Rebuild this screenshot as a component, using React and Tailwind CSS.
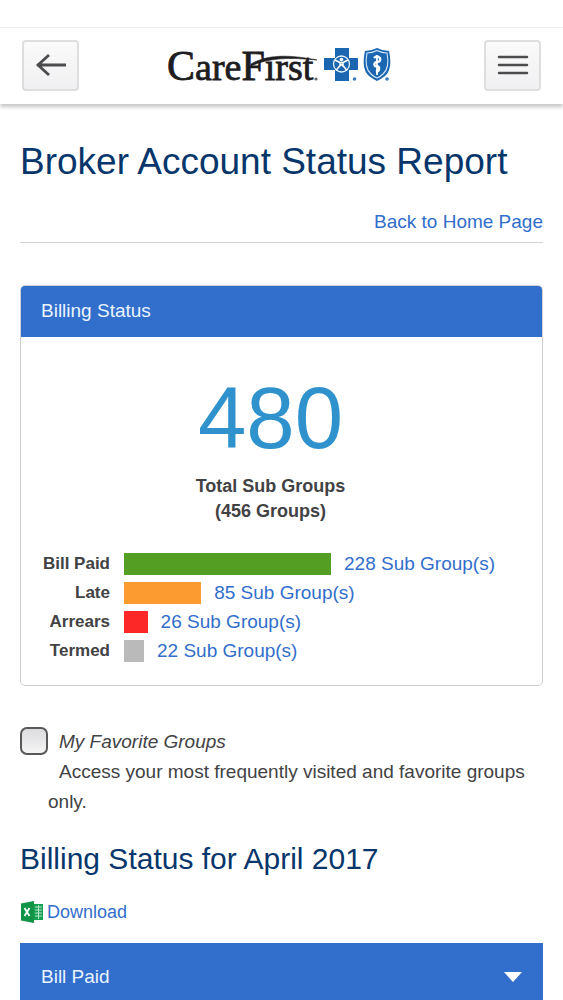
import React, { useState } from 'react';

const bars = [
  { label: 'Bill Paid', count: 228, color: 'bg-[#549e23]' },
  { label: 'Late', count: 85, color: 'bg-[#fb9b30]' },
  { label: 'Arrears', count: 26, color: 'bg-[#fc2828]' },
  { label: 'Termed', count: 22, color: 'bg-[#bababa]' },
];

const maxCount = Math.max(...bars.map((bar) => bar.count));

function Logo() {
  return (
    <svg viewBox="0 0 230 50" className="w-[230px] h-[50px] overflow-visible" role="img" aria-label="CareFirst">
      <text x="0" y="40" fontFamily="'Liberation Serif', serif" fontSize="38" fill="#1d1d1f" stroke="#1d1d1f" strokeWidth="0.8">
        <tspan fontSize="42">C</tspan>are<tspan fontSize="42">F</tspan>irst
      </text>
      {/* the swoosh takes the place of the dot on the i */}
      <circle cx="103" cy="16" r="3.500" fill="#fff" />
      <path d="M84 24C99 15 120 14 150 20C122 17 101 18 84 26z" fill="#1d1d1f" stroke="#1d1d1f" strokeWidth="0.6" />
      <circle cx="149" cy="39" r="1.600" fill="#666" />

      {/* Blue Cross */}
      <path d="M168 8h14v10h9v12h-9v11h-14V30h-11V18h11z" fill="#1b66b1" />
      <circle cx="174.500" cy="24" r="8" fill="none" stroke="#e4f1fb" strokeWidth="1.300" />
      <circle cx="174.500" cy="19.500" r="1.800" fill="#fff" />
      <path d="M168 20l5 2.500v3l-4 5M181 20l-5 2.500v3l4 5M173 22.500h3M172 27l2.500-2.500 2.500 2.500" fill="none" stroke="#fff" strokeWidth="1.500" />
      <circle cx="187.500" cy="39" r="1.800" fill="#397bc0" />

      {/* Blue Shield */}
      <path d="M198 11q6 0 12-3q6 3 12 3q4 18-4 25q-4 3-8 5q-4-2-8-5q-8-7-4-25z" fill="#1b66b1" />
      <path d="M200 13q5 0 10-2.500q5 2.500 10 2.500q3 15-4 21q-3 3-6 4q-3-1-6-4q-7-6-4-21z" fill="none" stroke="#d7eaf8" strokeWidth="1.100" />
      <path d="M210 15v20" stroke="#fff" strokeWidth="1.800" />
      <path d="M207 18q3-3 6 0q1 4-3 4q-4 1-2 4q5 0 4 3q0 2-3 3" fill="none" stroke="#fff" strokeWidth="2.400" />
      <circle cx="220" cy="39" r="1.800" fill="#397bc0" />
    </svg>
  );
}

function ExcelIcon() {
  return (
    <svg viewBox="0 0 24 24" className="w-6 h-6" aria-hidden="true">
      <path d="M12 4h11v16H12z" fill="#16a052" />
      <path d="M15 7h7M15 10h7M15 13h7M15 16h7M18.500 5v14" stroke="#b7e6ca" strokeWidth="1" />
      <path d="M1 3.500L14 1v22L1 20.500z" fill="#129448" />
      <path d="M4.500 8l5 8M9.500 8l-5 8" stroke="#fff" strokeWidth="1.800" />
    </svg>
  );
}

function App() {
  const [favorites, setFavorites] = useState(false);
  const [open, setOpen] = useState(false);

  const iconButton =
    'flex items-center justify-center w-[57px] h-[51px] rounded border-2 border-[#dededf] bg-gradient-to-b from-[#fafafa] to-[#f0f0f2] text-[#4c4c4f]';

  return (
    <div className="min-h-screen overflow-hidden bg-white pt-[27px] font-['Liberation_Sans',Arial,sans-serif] text-[#424244]">
      <header className="flex items-center justify-between h-[77px] px-[22px] pb-0.5 border-t border-[#f0eff0] bg-white shadow-[0_3px_4px_#c6c6c8]">
        <button type="button" aria-label="Back" className={iconButton}>
          <svg viewBox="0 0 32 24" className="w-8 h-6" fill="none" stroke="currentColor" strokeWidth="2.800">
            <path d="M31 12H2M14 2L3 12l11 10" />
          </svg>
        </button>
        <Logo />
        <button type="button" aria-label="Menu" className={iconButton}>
          <svg viewBox="0 0 32 24" className="w-8 h-6" stroke="currentColor" strokeWidth="2.500" strokeLinecap="round">
            <path d="M2 4h28M2 12h28M2 20h28" />
          </svg>
        </button>
      </header>

      <main className="px-5 pt-9">
        <h1 className="text-[37px] leading-[44px] text-[#07366b]">Broker Account Status Report</h1>

        <div className="mt-[25px] pb-[7px] border-b border-[#d4d4d4] text-right text-[19px] leading-[26px]">
          <a href="#home" className="text-[#326ecb]">Back to Home Page</a>
        </div>

        <section className="mt-[42px] rounded-[5px] border border-[#d0d0d2] overflow-hidden">
          <h2 className="-m-px px-[21px] py-3 text-[19px] leading-7 bg-[#326ecb] text-[#e9f4ff]">Billing Status</h2>

          <div className="pt-8 pb-5">
            <div className="pr-[22px] text-center">
              <div className="text-[87px] leading-[100px] text-[#3092cd]">480</div>
              <p className="mt-1.5 text-[18px] leading-[25px] font-bold">
                Total Sub Groups
                <br />
                (456 Groups)
              </p>
            </div>

            <ul className="mt-[25px] pr-1">
              {bars.map((bar) => (
                <li key={bar.label} className="flex items-center h-[29px]">
                  <span className="w-[89px] shrink-0 text-right text-[17px] leading-7 font-bold">{bar.label}</span>
                  <div className="flex flex-1 items-center ml-[14px]">
                    {/* the longest bar takes half of the row */}
                    <div className={`h-[22px] shrink-0 ${bar.color}`} style={{ width: `${(bar.count / maxCount) * 50}%` }} />
                    <a href={`#${bar.label}`} className="ml-[13px] whitespace-nowrap text-[19px] leading-7 text-[#326ecb]">
                      {bar.count} Sub Group(s)
                    </a>
                  </div>
                </li>
              ))}
            </ul>
          </div>
        </section>

        <div className="mt-[41px] flex items-start">
          <input
            id="favorites"
            type="checkbox"
            checked={favorites}
            onChange={(e) => setFavorites(e.target.checked)}
            className="appearance-none w-7 h-7 shrink-0 rounded-[7px] border-2 border-[#58585a] bg-gradient-to-b from-[#dcdcde] to-[#f5f5f6] checked:from-[#326ecb] checked:to-[#326ecb]"
          />
          <label htmlFor="favorites" className="text-[19px] leading-[30px]">
            <em className="block pl-[11px]">My Favorite Groups</em>
            <span className="block indent-[11px]">
              Access your most frequently visited and favorite groups only.
            </span>
          </label>
        </div>

        <h2 className="mt-6 text-[30px] leading-9 text-[#07366b]">Billing Status for April 2017</h2>

        <a href="#download" className="mt-[23px] flex w-fit items-center gap-[3px] text-[18px] leading-6 text-[#326ecb]">
          <ExcelIcon />
          Download
        </a>

        <button
          type="button"
          aria-expanded={open}
          onClick={() => setOpen(!open)}
          className="mt-[19px] flex w-full items-center justify-between h-[68px] px-[21px] bg-[#326ecb] text-[19px] text-[#e9f4ff]"
        >
          Bill Paid
          <svg viewBox="0 0 18 10" className="w-[18px] h-[10px]" fill="#fff">
            <path d="M0 0h18L9 10z" />
          </svg>
        </button>
      </main>
    </div>
  );
}

export default App;
